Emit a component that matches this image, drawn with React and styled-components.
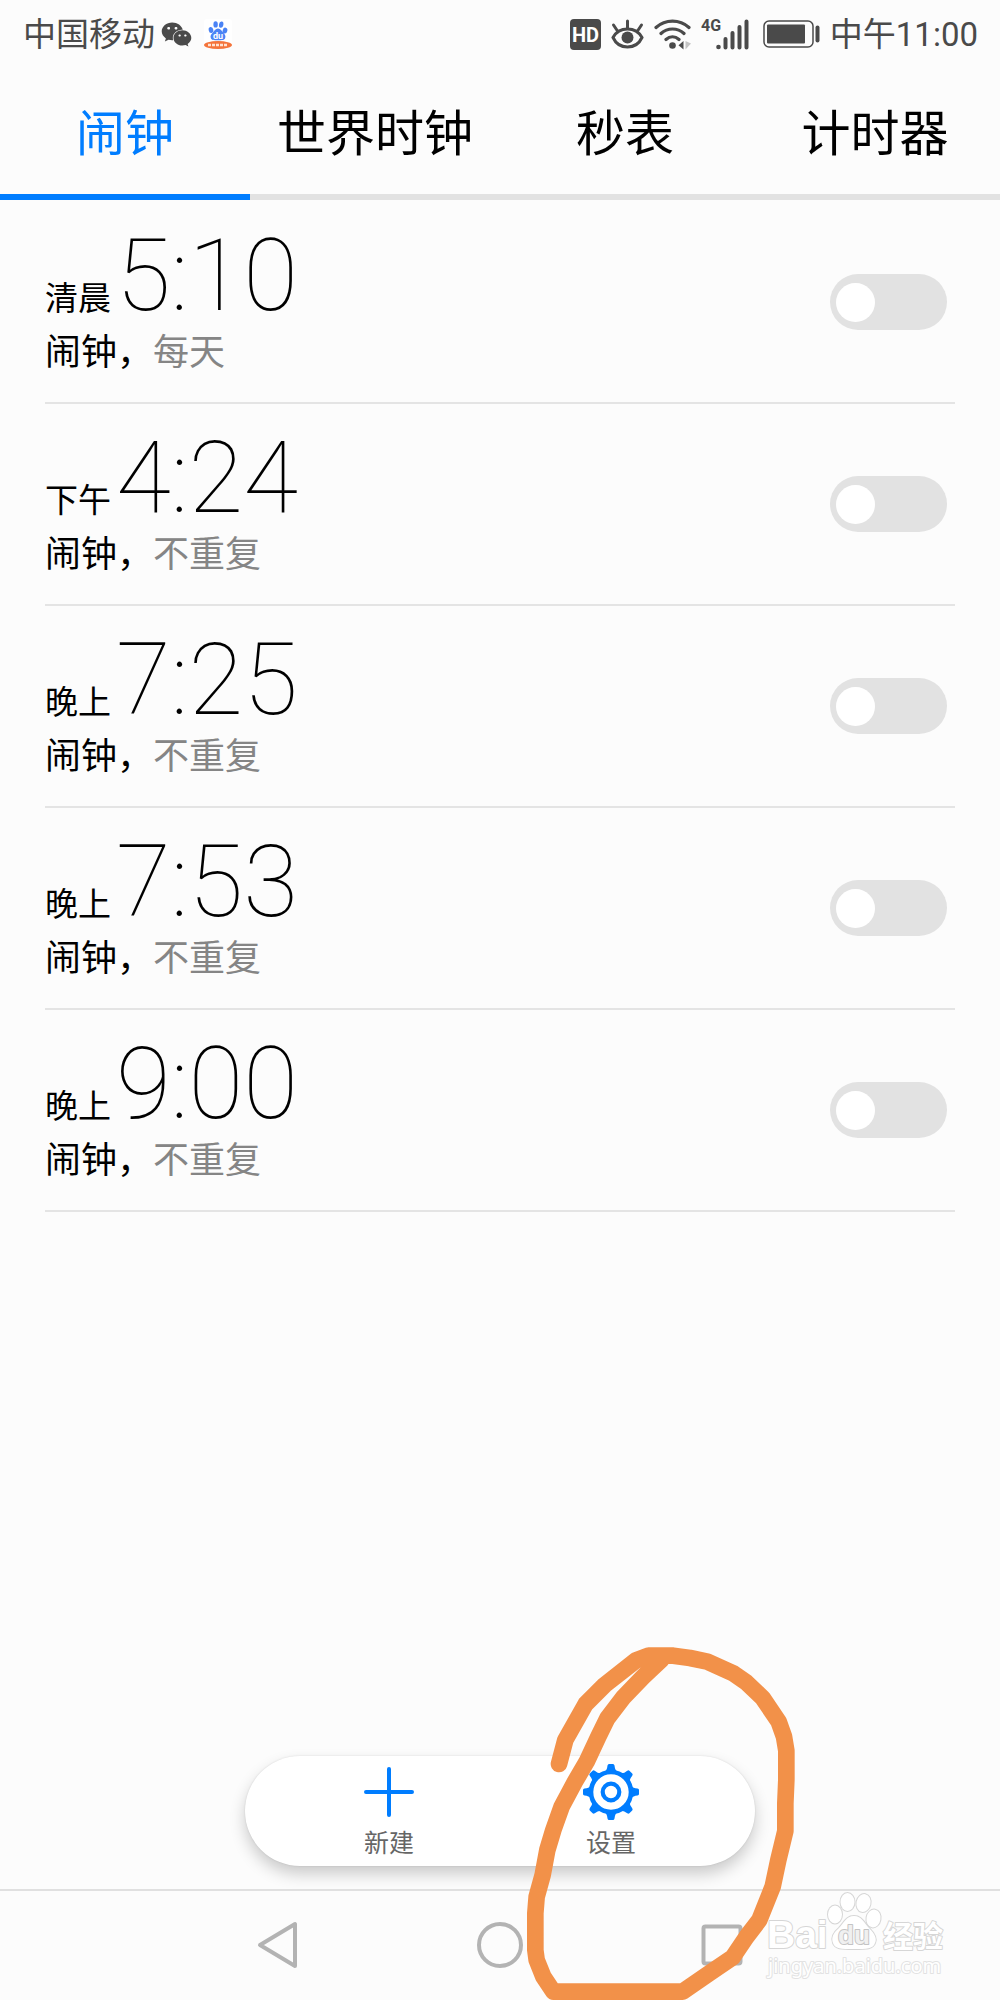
import React, {useState} from "react";
import styled, {createGlobalStyle} from "styled-components";
import {FaWeixin} from "react-icons/fa";

const GlobalStyle = createGlobalStyle`
    * {
        box-sizing: border-box;
    }

    body {
        margin: 0;
        background: #fcfcfc;
        color: #000000;
        font-family: Roboto, "Noto Sans CJK SC", sans-serif;
        font-weight: 400;
    }

    button {
        border: none;
        background: none;
        padding: 0;
        color: inherit;
        font-family: inherit;
        font-weight: inherit;
        cursor: pointer;
    }

    svg {
        display: block;
        flex: none;
    }
`;

const Page = styled.div`
    display: flex;
    flex-direction: column;
    min-height: 100vh;
    overflow: hidden;
`;

const StatusBarStyled = styled.header`
    display: flex;
    align-items: center;
    justify-content: space-between;
    height: 68px;
    padding: 0 22px 0 23px;
    color: #4a4a4a;
    font-size: 33px;
    line-height: 40px;
`;

const StatusGroup = styled.div`
    display: flex;
    align-items: center;
    gap: ${(props) => props.$gap}px;
`;

const StatusText = styled.span`
    padding-top: 2px;
`;

const TabBar = styled.nav`
    display: grid;
    grid-template-columns: repeat(4, 1fr);
`;

const Tab = styled.button`
    height: 132px;
    padding-top: 8px;
    border-bottom: 6px solid ${(props) => (props.$active ? "#007dff" : "#e2e2e2")};
    color: ${(props) => (props.$active ? "#007dff" : "#000000")};
    font-size: 49px;
    line-height: 60px;
    white-space: nowrap;
`;

const AlarmList = styled.ul`
    flex: 1;
    margin: 0;
    padding: 2px 45px 0;
    list-style: none;
`;

const AlarmRow = styled.li`
    display: flex;
    align-items: center;
    justify-content: space-between;
    height: 202px;
    padding-right: 8px;
    border-bottom: 2px solid #e4e4e4;
`;

const AlarmText = styled.label`
    display: flex;
    flex-direction: column;
    gap: 5px;
`;

const AlarmTime = styled.span`
    display: flex;
    align-items: baseline;
    gap: 5px;
    height: 96px;
    font-size: 33px;
    line-height: 96px;
`;

const Digits = styled.span`
    font-size: 100px;
    font-weight: 100;
`;

const AlarmNote = styled.span`
    font-size: 36px;
    line-height: 48px;
`;

const Repeat = styled.span`
    color: #858585;
`;

const Switch = styled.input`
    appearance: none;
    display: flex;
    align-items: center;
    width: 117px;
    height: 56px;
    margin: 0;
    padding: 0 6px;
    border-radius: 28px;
    background: #e2e2e2;
    cursor: pointer;

    &::before {
        content: "";
        width: 39px;
        height: 39px;
        border-radius: 50%;
        background: #ffffff;
    }

    &:checked {
        justify-content: flex-end;
        background: #007dff;
    }
`;

const Dock = styled.footer`
    position: relative;
    display: flex;
    flex-direction: column;
    align-items: center;
    gap: 23px;
`;

const ActionBar = styled.div`
    display: flex;
    justify-content: center;
    width: 51%;
    height: 110px;
    border-radius: 55px;
    background: #ffffff;
    box-shadow: 0 8px 16px rgba(0, 0, 0, 0.2), 0 0 2px rgba(0, 0, 0, 0.12);
`;

const Action = styled.button`
    display: flex;
    flex-direction: column;
    align-items: center;
    gap: 8px;
    width: 222px;
    padding-top: 8px;
    color: #666666;
    font-size: 25px;
    line-height: 32px;
`;

const SystemNav = styled.nav`
    position: relative;
    display: flex;
    justify-content: center;
    width: 100%;
    height: 111px;
    padding-bottom: 2px;
    border-top: 2px solid #e0e0e0;
`;

const SystemButton = styled.button`
    display: flex;
    align-items: center;
    justify-content: center;
    width: 222px;
`;

const Scribble = styled.svg`
    position: absolute;
    left: 50%;
    bottom: 0;
    pointer-events: none;
`;

const Watermark = styled.svg`
    position: absolute;
    right: 48px;
    top: 0;
    pointer-events: none;
`;

const alarms = [
    {id: 1, period: "清晨", time: "5:10", repeat: "每天"},
    {id: 2, period: "下午", time: "4:24", repeat: "不重复"},
    {id: 3, period: "晚上", time: "7:25", repeat: "不重复"},
    {id: 4, period: "晚上", time: "7:53", repeat: "不重复"},
    {id: 5, period: "晚上", time: "9:00", repeat: "不重复"},
];

const tabs = ["闹钟", "世界时钟", "秒表", "计时器"];

function BaiduIcon() {
    return (
        <svg width="36" height="31" viewBox="-5 0 36 31">
            <rect x="1" y="0" width="28" height="28" rx="3" fill="#ffffff" />
            <g fill="#4a83f5">
                <ellipse cx="8" cy="11" rx="2.3" ry="3" transform="rotate(-12 8 11)" />
                <ellipse cx="12.6" cy="5.4" rx="2.2" ry="3.2" />
                <ellipse cx="18.2" cy="5.6" rx="2.2" ry="3.2" transform="rotate(10 18.2 5.6)" />
                <ellipse cx="22" cy="11.6" rx="2.3" ry="3" transform="rotate(15 22 11.6)" />
                <path d="M15 9.500c2.600 0 3.700 2.400 5.300 4.300 1.700 1.900 2.600 3.200 1.900 5.200-.7 2.200-2.800 2.200-7.200 2.200s-6.500 0-7.200-2.200c-.7-2 .2-3.300 1.900-5.200 1.600-1.900 2.700-4.300 5.300-4.300z" />
            </g>
            <text x="15" y="19.500" textAnchor="middle" fontSize="9" fontWeight="700" fill="#ffffff">du</text>
            <ellipse cx="15" cy="26" rx="14" ry="4" fill="#f4743b" />
            <path d="M5 26h20" stroke="#ffe2d2" strokeWidth="2.500" strokeDasharray="3 1" />
        </svg>
    );
}

function HdIcon() {
    return (
        <svg width="31" height="31" viewBox="0 0 31 31">
            <rect width="31" height="31" rx="4" fill="#4a4a4a" />
            <text x="15.500" y="22.500" textAnchor="middle" fontSize="20" fontWeight="700" fill="#ffffff">HD</text>
        </svg>
    );
}

function EyeIcon() {
    return (
        <svg width="33" height="31" viewBox="0 0 33 31" fill="none" stroke="#4a4a4a" strokeWidth="3" strokeLinecap="round">
            <path d="M2 18.500C5 13 10.500 10 16.500 10S28 13 31 18.500C28 25 22.500 28 16.500 28S5 25 2 18.500z" />
            <circle cx="16.500" cy="18.500" r="6" fill="#4a4a4a" stroke="none" />
            <path d="M16.500 9V2M6.500 12L2.500 6M26.500 12l4-6" />
        </svg>
    );
}

function WifiIcon() {
    return (
        <svg width="37" height="31" viewBox="0 0 37 31" fill="none" stroke="#4a4a4a" strokeWidth="3.200" strokeLinecap="round">
            <path d="M2 8.500C11.500 0 25.500 0 35 8.500M7 14.500c6.500-6 16.500-6 23 0M12 20.500c4-3.500 9-3.500 13 0" />
            <circle cx="18.500" cy="26.500" r="3.300" fill="#4a4a4a" stroke="none" />
            <path d="M29.500 22v8.500L24.500 26.300z" fill="#4a4a4a" stroke="none" />
            <path d="M31.500 22v8.500L37 24.500z" fill="#c4c4c4" stroke="none" />
        </svg>
    );
}

function SignalIcon() {
    return (
        <svg width="52" height="43" viewBox="1 -6 52 43">
            <text x="1" y="12" fontSize="16" fontWeight="700" fill="#4a4a4a">4G</text>
            <path d="M25.500 20v8.500M32.500 14v14.500M39.500 8v20.500M46.500 2.500v26" stroke="#4a4a4a" strokeWidth="4" strokeLinecap="round" />
            <circle cx="18.500" cy="28" r="2.300" fill="#4a4a4a" />
        </svg>
    );
}

function BatteryIcon() {
    return (
        <svg width="57" height="28" viewBox="0 0 57 28">
            <rect x="1" y="1" width="49" height="26" rx="5" fill="none" stroke="#4a4a4a" strokeWidth="1.500" />
            <rect x="4" y="4.500" width="38" height="19" rx="1" fill="#4a4a4a" />
            <rect x="52.500" y="5.500" width="4" height="17" rx="2" fill="#4a4a4a" />
        </svg>
    );
}

function PlusIcon() {
    return (
        <svg width="56" height="56" viewBox="0 0 56 56">
            <path d="M28 5v46M5 28h46" stroke="#007dff" strokeWidth="4" strokeLinecap="round" />
        </svg>
    );
}

function GearIcon() {
    const teeth = [0, 45, 90, 135, 180, 225, 270, 315];
    return (
        <svg width="56" height="56" viewBox="0 0 56 56">
            <circle cx="28" cy="28" r="20" fill="none" stroke="#007dff" strokeWidth="4.600" />
            <circle cx="28" cy="28" r="8.300" fill="none" stroke="#007dff" strokeWidth="4.200" />
            {teeth.map((angle) => (
                <path
                    key={angle}
                    d="M22 7.500Q24 6 24.500 1.500Q24.800 0 26 0h4Q31.200 0 31.500 1.500Q32 6 34 7.500z"
                    transform={`rotate(${angle} 28 28)`}
                    fill="#007dff"
                />
            ))}
        </svg>
    );
}

function BaiduWatermark() {
    return (
        <Watermark width="190" height="100" viewBox="0 0 190 100">
            <g fill="#ffffff" stroke="#d6d6d6" strokeWidth="2" paintOrder="stroke" strokeLinejoin="round">
                <text x="5" y="57" fontSize="39" fontWeight="700" fontFamily="Liberation Sans">Bai</text>
                <ellipse cx="73" cy="23.500" rx="7" ry="9" />
                <ellipse cx="85.500" cy="11" rx="7" ry="9" />
                <ellipse cx="101.500" cy="12" rx="7" ry="9" transform="rotate(12 101.500 12)" />
                <ellipse cx="111.500" cy="27.500" rx="7" ry="9" transform="rotate(10 111.500 27.500)" />
                <path d="M92 25c8 0 10 7 15 12 6 6 8 11 6 15-2 6-8 6-21 6s-19 0-21-6c-2-5 0-10 6-15 5-5 7-12 15-12z" />
                <text x="92" y="53" fontSize="26" fontWeight="700" fontFamily="Liberation Sans" textAnchor="middle" fill="#f0f0f0" stroke="#c4c4c4">du</text>
                <text x="121" y="56" fontSize="30" fontWeight="700" fontFamily="Noto Sans CJK SC">经验</text>
                <text x="6" y="82" fontSize="20" fontWeight="400" fontFamily="Noto Sans" stroke="#e2e2e2">jingyan.baidu.com</text>
            </g>
        </Watermark>
    );
}

function StatusBar() {
    return (
        <StatusBarStyled>
            <StatusGroup $gap={6}>
                <StatusText>中国移动</StatusText>
                <FaWeixin size={31} />
                <BaiduIcon />
            </StatusGroup>
            <StatusGroup $gap={10}>
                <HdIcon />
                <EyeIcon />
                <WifiIcon />
                <SignalIcon />
                <BatteryIcon />
                <StatusText>中午11:00</StatusText>
            </StatusGroup>
        </StatusBarStyled>
    );
}

function Alarm({alarm}) {
    const [on, setOn] = useState(false);
    const id = `alarm-${alarm.id}`;

    return (
        <AlarmRow>
            <AlarmText htmlFor={id}>
                <AlarmTime>
                    {alarm.period}
                    <Digits>{alarm.time}</Digits>
                </AlarmTime>
                <AlarmNote>
                    闹钟，<Repeat>{alarm.repeat}</Repeat>
                </AlarmNote>
            </AlarmText>
            <Switch id={id} type="checkbox" checked={on} onChange={() => setOn(!on)} />
        </AlarmRow>
    );
}

function App() {
    const [active, setActive] = useState(0);

    return (
        <Page>
            <GlobalStyle />
            <StatusBar />
            <TabBar>
                {tabs.map((title, index) => (
                    <Tab key={title} $active={index === active} onClick={() => setActive(index)}>
                        {title}
                    </Tab>
                ))}
            </TabBar>
            <AlarmList>
                {alarms.map((alarm) => (
                    <Alarm key={alarm.id} alarm={alarm} />
                ))}
            </AlarmList>
            <Dock>
                <ActionBar>
                    <Action>
                        <PlusIcon />
                        新建
                    </Action>
                    <Action>
                        <GearIcon />
                        设置
                    </Action>
                </ActionBar>
                <SystemNav>
                    <SystemButton aria-label="返回">
                        <svg width="44" height="50" viewBox="0 0 44 50" fill="none" stroke="#b3b3b3" strokeWidth="4" strokeLinejoin="round">
                            <path d="M4 25L39 4v42z" />
                        </svg>
                    </SystemButton>
                    <SystemButton aria-label="主屏幕">
                        <svg width="46" height="46" viewBox="0 0 46 46" fill="none" stroke="#b3b3b3" strokeWidth="4">
                            <circle cx="23" cy="23" r="21" />
                        </svg>
                    </SystemButton>
                    <SystemButton aria-label="最近任务">
                        <svg width="42" height="42" viewBox="0 0 42 42" fill="none" stroke="#b3b3b3" strokeWidth="4">
                            <rect x="2.500" y="2.500" width="37" height="37" rx="2" />
                        </svg>
                    </SystemButton>
                    <BaiduWatermark />
                </SystemNav>
                {/* hand-drawn circle round the settings button */}
                <Scribble width="320" height="370" viewBox="0 0 960 1110" fill="none" stroke="#f29149" strokeWidth="50" strokeLinecap="round" strokeLinejoin="round">
                    <path d="M177 402L196 330L257 222L314 165L408 91L446 77H520L570 84L622 95L700 130L740 158L788 204L836 275L852 320L859 362V450L856 520V603L835 690L818 770L778 870L740 920L698 982L635 1025L548 1085H160L130 1040L110 990L106 960V850L110 800L128 735L142 660L160 600L185 530L225 455L260 395L295 320L322 265L370 202L430 140L485 88" />
                </Scribble>
            </Dock>
        </Page>
    );
}

export default App;
